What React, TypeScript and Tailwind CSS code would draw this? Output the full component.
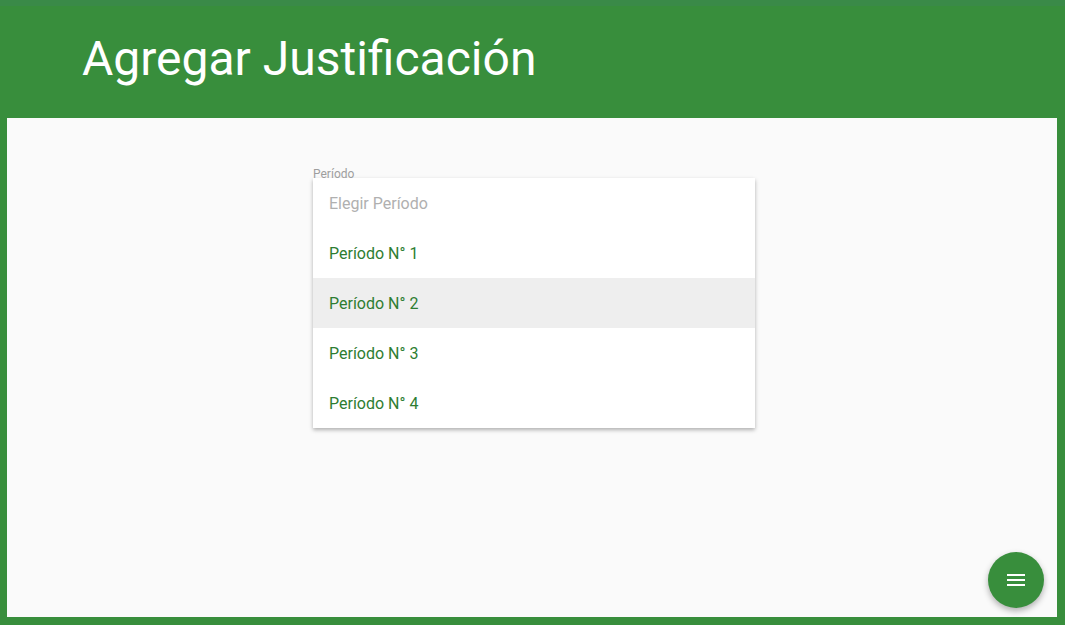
const periods = ["Período N° 1", "Período N° 2", "Período N° 3", "Período N° 4"];

export default function App() {
  return (
    <div className="h-[625px] w-[1065px] overflow-hidden bg-[#388e3c] flex flex-col font-['Roboto',sans-serif]">
      <div className="h-[6px] bg-[#3a8a48]" />
      <header className="h-[112px] pl-[82px] pt-[23px]">
        <h1 className="text-[48px] leading-[60px] text-white font-normal">Agregar Justificación</h1>
      </header>
      <main className="relative mx-[7px] mr-[8px] mb-[8px] flex-1 bg-[#fafafa]">
        <div className="ml-[306px] mt-[49px] w-[442px]">
          <div className="text-[12px] leading-[12px] text-[#9e9e9e] h-[11px] pt-px">Período</div>
          <ul className="bg-white shadow-[0_2px_4px_rgba(0,0,0,0.3)]">
            <li className="h-[50px] px-4 pt-[2px] flex items-center text-[16px] text-[#b0b0b0]">Elegir Período</li>
            {periods.map((p, i) => (
              <li
                key={p}
                className={`h-[50px] px-4 pt-[2px] flex items-center text-[16px] text-[#2e7d32] ${i === 1 ? "bg-[#eeeeee]" : ""}`}
              >
                {p}
              </li>
            ))}
          </ul>
        </div>
        <button className="absolute right-[13px] bottom-[9px] w-[56px] h-[56px] rounded-full bg-[#388e3c] flex items-center justify-center shadow-[0_3px_6px_rgba(0,0,0,0.3)]">
          <svg viewBox="0 0 24 24" className="w-[24px] h-[24px] fill-white">
            <path d="M3 18h18v-2H3v2zm0-5h18v-2H3v2zm0-7v2h18V6H3z" />
          </svg>
        </button>
      </main>
    </div>
  );
}
